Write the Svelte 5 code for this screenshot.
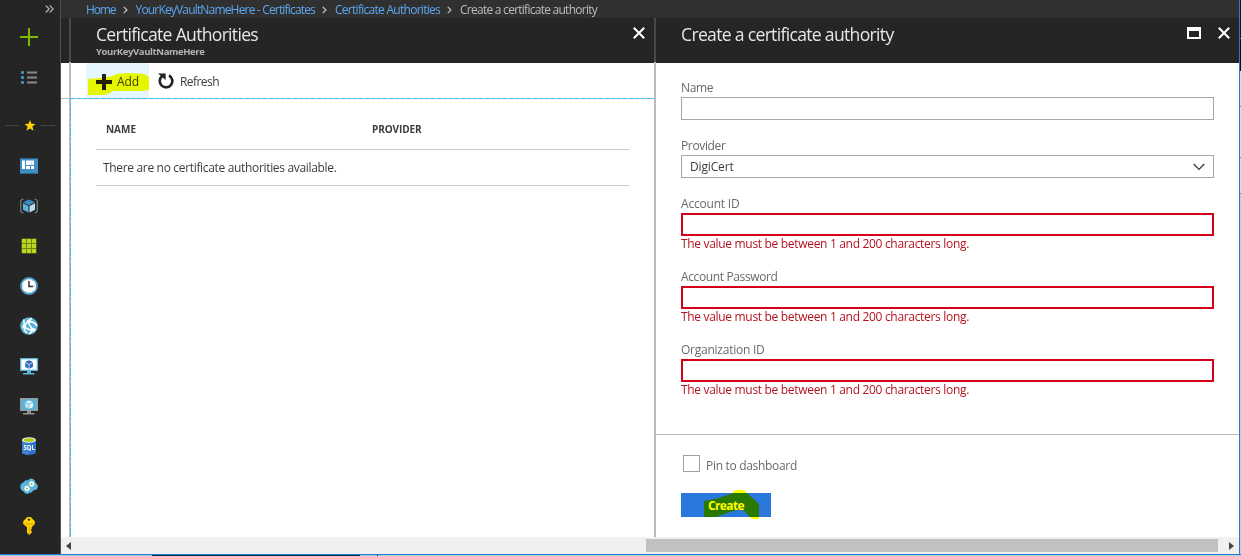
<script>
  // Tracks a label out or in so that it spans the given width.
  function fit(node, width) {
    const natural = node.getBoundingClientRect().width;
    const count = node.textContent.length;
    node.style.letterSpacing = (width - natural) / count + 'px';
  }

  const crumbs = [
    { text: 'Home', w: 29.5 },
    { text: 'YourKeyVaultNameHere - Certificates', w: 179.5 },
    { text: 'Certificate Authorities', w: 105 }
  ];
  const columns = [
    { text: 'NAME', w: 30 },
    { text: 'PROVIDER', w: 49.5 }
  ];
  const required = [
    { label: 'Account ID', w: 58.5 },
    { label: 'Account Password', w: 96.5 },
    { label: 'Organization ID', w: 83.5 }
  ];
  const message = 'The value must be between 1 and 200 characters long.';
  const services = ['dashboard', 'group', 'grid', 'clock', 'globe', 'vm', 'classic', 'sql', 'cloud', 'key'];
</script>

{#snippet close()}
  <svg class="close" width="12" height="12" viewBox="0 0 12 12"><path d="M.8.8 11.2 11.2M11.2.8.8 11.2" stroke="#fff" stroke-width="2" /></svg>
{/snippet}

{#snippet chevron()}
  <svg class="chev" width="5" height="8" viewBox="0 0 5 8"><path d="M.7.8 4 4 .7 7.2" fill="none" stroke="#ccc" stroke-width="1.1" /></svg>
{/snippet}

{#snippet cube(light, mid, dark)}
  <path d="M9 2.5 15 5.2 9 8.2 3 5.2Z" fill={dark} />
  <path d="M3 6.2 8.5 9V15.6L3 12.8Z" fill={mid} />
  <path d="M15 6.2 9.5 9V15.6L15 12.8Z" fill={light} />
{/snippet}

<div class="page">
  <nav class="side">
    <div class="expand">
      <svg width="9" height="8" viewBox="0 0 9 8"><path d="M.7.5 4.2 4 .7 7.5M4.7.5 8.2 4 4.7 7.5" fill="none" stroke="#aaa" stroke-width="1.3" /></svg>
    </div>
    <div class="new"><svg width="18" height="18" viewBox="0 0 18 18"><path d="M9 0V18M0 9H18" stroke="#7fba00" stroke-width="2" /></svg></div>
    <div class="all">
      <svg width="17" height="13" viewBox="0 0 17 13">
        <g fill="#3f93c5"><rect y="0" width="3" height="3" rx="1" /><rect y="5" width="3" height="3" rx="1" /><rect y="10" width="3" height="3" rx="1" /></g>
        <path d="M6 1.5H16M6 6.5H16M6 11.5H16" stroke="#8b8b8b" stroke-width="2.2" />
      </svg>
    </div>
    <div class="fav">
      <i></i>
      <svg width="12" height="11" viewBox="0 0 12 11"><path d="M6 0 7.5 3.8 11.5 4 8.4 6.6 9.5 10.7 6 8.4 2.5 10.7 3.6 6.6.5 4 4.5 3.8Z" fill="#ffd400" /></svg>
      <i></i>
    </div>
    {#each services as s}
      <div class="item">
        <svg width="18" height="18" viewBox="0 0 18 18">
          {#if s === 'dashboard'}
            <rect y="1" width="18" height="16" fill="#3f8fc4" /><rect y="1" width="18" height="1" fill="#2d6588" /><rect y="16" width="18" height="1" fill="#2d6588" />
            <path d="M2 3.5H5V12H2ZM6 3.5H14V8H6ZM6 9H10V12H6ZM11 9H14V12H11Z" fill="#fff" />
            <path d="M11.5 4V8" stroke="#a9cfe6" stroke-width=".6" />
          {:else if s === 'group'}
            <path d="M3.5 2.2H2.2L.8 3.6V14.4L2.2 15.8H3.5M14.5 2.2H15.8L17.2 3.6V14.4L15.8 15.8H14.5" fill="none" stroke="#858585" stroke-width="1.1" />
            {@render cube('#b8def2', '#5fb1dc', '#3c8fc6')}
          {:else if s === 'grid'}
            <path d="M1.5 1.5H16.5V16.5H1.5Z" fill="#6e8512" />
            <path d="M2 2H6V6H2ZM7 2H11V6H7ZM12 2H16V6H12ZM2 7H6V11H2ZM7 7H11V11H7ZM12 7H16V11H12ZM2 12H6V16H2ZM7 12H11V16H7ZM12 12H16V16H12Z" fill="#b8d820" />
          {:else if s === 'clock'}
            <circle cx="9" cy="9" r="8" fill="#fff" stroke="#4a9fd0" stroke-width="1.8" />
            <path d="M9 2.3V3.5M9 14.5V15.7M2.3 9H3.5M14.5 9H15.7M5.5 3.2 6 4M12.5 3.2 12 4M5.5 14.8 6 14M12.5 14.8 12 14" stroke="#9a9a9a" stroke-width=".8" />
            <path d="M9 4V9.5H13.3" fill="none" stroke="#333" stroke-width="1.5" />
          {:else if s === 'globe'}
            <circle cx="9" cy="9" r="8.8" fill="#59b4d9" />
            <path d="M3.5 2.5Q4.5 5 4.2 9.6T7 15.8M12 1.2Q8 3 4.2 9.6M7.5 3.8Q9.5 9 13 12.7M4.2 9.6Q8 13.5 16 13M10 4.4Q14.5 5 17 9M13 12.7Q11 15.5 9 16.8" fill="none" stroke="#fff" stroke-width="1.6" />
            <circle cx="8.8" cy="4.4" r="1.9" fill="#fff" /><circle cx="4.2" cy="9.6" r="2" fill="#fff" /><circle cx="13" cy="12.7" r="2" fill="#fff" />
          {:else if s === 'vm' || s === 'classic'}
            <path d="M0 1H18V14H0Z" fill={s === 'vm' ? '#59b4d9' : '#9a9a9a'} />
            <path d="M1.3 2.3H16.7V12.7H1.3Z" fill={s === 'vm' ? '#fff' : '#59b4d9'} />
            <path d="M7 14H11V16H14.5V17.5H3V16H7Z" fill={s === 'vm' ? '#59b4d9' : '#929292'} />
            <g transform="translate(3.2 1.6) scale(.65)">
              {#if s === 'vm'}{@render cube('#2c67b8', '#3070c4', '#2b62b0')}{:else}{@render cube('#eaf6fb', '#c3e4f1', '#d8eef7')}{/if}
            </g>
          {:else if s === 'sql'}
            <path d="M2 3V15Q2 17.8 9 17.8T16 15V3Z" fill="#2f73c9" /><path d="M2 3V15Q2 17.8 9 17.8V3Z" fill="#3e82d4" />
            <ellipse cx="9" cy="3" rx="7" ry="2.8" fill="#e8f1f8" /><ellipse cx="9" cy="3" rx="5.4" ry="1.8" fill="#a5ce00" />
            <text x="3.4" y="13.4" font-size="7" font-weight="700" textLength="11.4" lengthAdjust="spacingAndGlyphs" fill="#fff">SQL</text>
          {:else if s === 'cloud'}
            <path d="M3.5 14.5Q0 13 .3 9 1 5.5 3.5 5.5 4.5 2.5 8 3.3 10 .7 13 2 15.5 3 15.3 5.8 18 7 17.8 10 17 13.5 13.5 13.2 12 16 9.5 15.7 7.5 18 5 16.3Z" fill="#59b4d9" />
            <g fill="#86b23d" stroke="#fff"><circle cx="7" cy="11.5" r="1.7" stroke-width="1.4" /><circle cx="11.7" cy="7" r="1.7" stroke-width="1.4" /><circle cx="7" cy="11.5" r="2.6" fill="none" stroke-width=".8" stroke-dasharray="1.2 1" /><circle cx="11.7" cy="7" r="2.6" fill="none" stroke-width=".8" stroke-dasharray="1.2 1" /></g>
          {:else}
            <path d="M7.3 0H10.7L14.8 4.2V7L11.7 10.2V12L10.5 13 11.7 14V15.5L9.3 18 7 15.7V10.2L3.2 7V4.2Z" fill="#ffd400" />
            <path d="M9.8 9V17.3L9.3 18 8.8 17V9Z" fill="#e0a400" /><path d="M4.5 6.5H13.5L12.7 7.5H5.5Z" fill="#d5a000" />
            <circle cx="9" cy="2.6" r="1.2" fill="#3c3212" />
          {/if}
        </svg>
      </div>
    {/each}
  </nav>

  <div class="main">
    <div class="crumbs">
      {#each crumbs as c}
        <a><span use:fit={c.w}>{c.text}</span></a>{@render chevron()}
      {/each}
      <span class="here" use:fit={137}>Create a certificate authority</span>
    </div>
    <div class="blades">
      <div class="sliver"><div class="dark"></div><div class="tool"></div></div>
      <section class="blade list">
        <header>
          <div><h1><span use:fit={162}>Certificate Authorities</span></h1><h2><span use:fit={108.5}>YourKeyVaultNameHere</span></h2></div>
          {@render close()}
        </header>
        <div class="toolbar">
          <div class="add">
            <svg width="16" height="16" viewBox="0 0 16 16"><path d="M8 0V16M0 8H16" stroke="#222" stroke-width="4" /></svg>
            <span use:fit={22}>Add</span>
            <svg class="mark" width="62" height="23" viewBox="0 0 62 23"><path d="M0 6 14 5 25 3 28 1 40 0 56 1 61 4V17L54 18 25 18 22 20 16 22H0Z" fill="#ff0" /></svg>
          </div>
          <div class="refresh">
            <svg width="16" height="17" viewBox="0 0 16 17"><path d="M4 3.2A6.3 6.3 0 1 0 11 2.5" fill="none" stroke="#222" stroke-width="2.6" /><path d="M0 .5H7.6V7Z" fill="#222" /></svg>
            <span use:fit={39}>Refresh</span>
          </div>
        </div>
        <div class="table">
          <div class="head">{#each columns as c}<div><span use:fit={c.w}>{c.text}</span></div>{/each}</div>
          <div class="row"><span use:fit={233.5}>There are no certificate authorities available.</span></div>
        </div>
      </section>
      <section class="blade form">
        <header>
          <h1><span use:fit={212.5}>Create a certificate authority</span></h1>
          <svg class="max" width="14" height="12" viewBox="0 0 14 12"><path fill-rule="evenodd" d="M0 0H14V12H0ZM2 4V10H12V4Z" fill="#fff" /></svg>
          {@render close()}
        </header>
        <div class="fields">
          <div class="field plain"><label><span use:fit={32}>Name</span></label><div class="box"></div></div>
          <div class="field plain"><label><span use:fit={44.5}>Provider</span></label>
            <div class="box select"><span use:fit={43.5}>DigiCert</span><svg width="12" height="8" viewBox="0 0 12 8"><path d="M.7 1 6 6.3 11.3 1" fill="none" stroke="#333" stroke-width="1.2" /></svg></div>
          </div>
          {#each required as f}
            <div class="field bad"><label><span use:fit={f.w}>{f.label}</span></label><div class="box"></div><p><span use:fit={288}>{message}</span></p></div>
          {/each}
        </div>
        <footer>
          <div class="pin"><i></i><span use:fit={91}>Pin to dashboard</span></div>
          <button><span use:fit={36}>Create</span>
            <svg class="mark2" width="56" height="30" viewBox="0 0 56 30"><path d="M0 11 15 8 29 3 31 0H40L43 3 55 14V29H48L42 23 39 20H33L23 23 12 27H0Z" fill="#ff0" /></svg>
          </button>
        </footer>
      </section>
    </div>
    <div class="scroll">
      <svg width="5" height="8" viewBox="0 0 5 8"><path d="M5 0V8L0 4Z" fill="#444" /></svg>
      <div class="thumb"></div>
      <svg width="5" height="8" viewBox="0 0 5 8"><path d="M0 0V8L5 4Z" fill="#444" /></svg>
    </div>
  </div>
  <div class="edge"></div>
  <div class="base"></div>
</div>

<style>
  :global(body) { margin: 0; }
  * { box-sizing: border-box; }
  .page { display: grid; grid-template-columns: 61px 1178px 2px; grid-template-rows: 554px 2px; width: 1241px; height: 556px; overflow: hidden; font: 12px/16px "Open Sans", "Noto Sans", sans-serif; color: #3c3c3c; background: #fff; }
  svg { display: block; flex: none; }
  span { white-space: pre; display: inline-block; }
  h1, h2, p { margin: 0; font-weight: 400; }
  .side { background: #252525; border-right: 1px solid #505050; }
  .expand { height: 18px; padding: 5px 0 0 45px; }
  .new { height: 46px; padding: 10px 0 0 20px; }
  .all { height: 42px; padding: 7px 0 0 21px; }
  .fav { height: 40px; display: flex; align-items: center; padding: 0 5px 2px; justify-content: space-between; }
  .fav i { width: 14px; height: 1px; background: #444; }
  .item { height: 40px; padding: 11px 0 0 20px; }
  .main { display: flex; flex-direction: column; min-width: 0; }
  .crumbs { height: 18px; background: #303030; display: flex; align-items: center; padding: 2px 0 0 25px; color: #bbb; }
  .crumbs a { color: #5ba7f0; height: 16px; }
  .chev { margin: 0 8px 0 7px; }
  .blades { height: 519px; display: flex; }
  .sliver { width: 8px; }
  .dark { height: 45px; background: #252525; }
  .tool { height: 36px; border-bottom: 1px solid #bbb; }
  .blade { width: 585px; border-image: linear-gradient(#484848 45px, #bbb 45px) 1; border-width: 0 0 0 2px; border-style: solid; display: flex; flex-direction: column; }
  .list { position: relative; }
  .list::before { content: ""; position: absolute; left: -1px; top: 80px; bottom: 0; width: 1px; background: repeating-linear-gradient(#31c0ff 0 3px, #aebcc5 3px 5px); }
  header { height: 45px; flex: none; background: #252525; color: #e6e6e6; display: flex; padding-left: 25px; }
  h1 { font-size: 17.6px; line-height: 24px; padding-top: 4px; height: 28px; flex: 1; }
  h2 { font-size: 9.5px; line-height: 11px; color: #b4b4b4; font-weight: 700; }
  header > div { flex: 1; }
  .close { margin: 9px 9px 0 0; }
  .max { margin: 9px 17px 0 0; }
  .toolbar { height: 36px; flex: none; display: flex; padding: 0 0 1px 15px; background: repeating-linear-gradient(90deg, #31c0ff 0 4px, #a9bfca 4px 6px) bottom / 100% 1px no-repeat; }
  .add { width: 63px; background: #e5f6fc; display: flex; align-items: center; padding: 2px 0 0 10px; gap: 5px; position: relative; }
  .mark { position: absolute; left: 2px; top: 10px; mix-blend-mode: multiply; }
  .refresh { display: flex; align-items: center; gap: 6px; padding: 2px 0 0 9px; }
  .toolbar span { padding-top: 1px; }
  .table { padding: 0 25px; }
  .head { height: 51px; display: grid; grid-template-columns: 266px 1fr; align-items: center; padding: 10px 0 0 10px; border-bottom: 1px solid #c8c8c8; font-size: 10px; font-weight: 700; }
  .row { height: 36px; padding: 10px 0 0 7px; border-bottom: 1px solid #c8c8c8; }
  .fields { padding: 17px 25px 0; height: 371px; color: #6a6a6a; }
  .field label { display: block; height: 17px; }
  .plain { height: 58px; }
  .bad { height: 73px; }
  .box { height: 23px; border: 1px solid #a6a6a6; }
  .select { display: flex; align-items: center; justify-content: space-between; padding: 1px 8px 0; color: #3c3c3c; }
  .bad .box { border: 2px solid #d4001a; }
  p { color: #b5121f; }
  footer { flex: 1; border-top: 1px solid #bbb; padding: 20px 25px 0; }
  .pin { display: flex; gap: 6px; height: 38px; padding-left: 2px; color: #6a6a6a; }
  .pin i { width: 17px; height: 17px; border: 1px solid #a0a0a0; }
  .pin span { margin-top: 3px; height: 16px; }
  button { display: block; position: relative; width: 90px; height: 24px; border: 0; padding: 1px 0 0; margin: 0; background: #2b78dc; color: #fff; font: 700 12px/24px "Open Sans", sans-serif; }
  .mark2 { position: absolute; left: 23px; top: -3px; mix-blend-mode: multiply; }
  .scroll { height: 17px; background: #f0f0f0; display: flex; align-items: center; padding: 0 5px; }
  .thumb { width: 572px; height: 13px; background: #c1c1c1; margin: 0 11px 0 auto; }
  .edge { border-left: 1px solid #1f80d0; background: linear-gradient(#151515 38px, #777 38px 39px, #0b0b0b 39px 71px, #ddd 71px 106px, #888 106px 107px, #ddd 107px 157px, #888 157px 158px, #ddd 158px 193px, #888 193px 194px, #ccc 194px); }
  .base { grid-column: 1 / 4; border-top: 1px solid #1f80d0; background: linear-gradient(90deg, #b3c3d0 152px, #142638 152px 360px, #b3c3d0 360px 377px, #142638 377px 378px, #c0ccd4 378px); }
</style>
